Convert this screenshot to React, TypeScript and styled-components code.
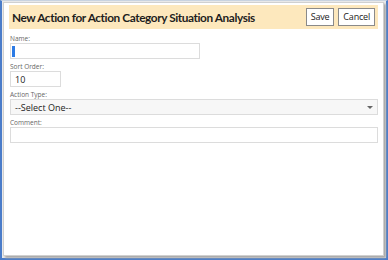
import React from 'react';
import styled, { createGlobalStyle } from 'styled-components';

const GlobalStyle = createGlobalStyle`
  html, body {
    margin: 0;
    padding: 0;
    width: 388px;
    height: 260px;
    overflow: hidden;
    font-family: "Open Sans", "Noto Sans", sans-serif;
  }
`;

const Frame = styled.div`
  box-sizing: border-box;
  width: 388px;
  height: 260px;
  border: 2px solid #4a7cc9;
  border-top: 1px solid #c9d3e0;
  background: #e9e9e9;
  padding: 1px 2px 2px 1px;
`;

const Dialog = styled.div`
  box-sizing: border-box;
  height: 100%;
  background: #ffffff;
  border: 1px solid #d0d0d0;
  box-shadow: 2px 2px 2px #a8a8a8;
  padding: 2px 5px 0 5px;
  display: flex;
  flex-direction: column;
`;

const Header = styled.div`
  display: flex;
  align-items: center;
  justify-content: space-between;
  background: #fde8bd;
  height: 24px;
  padding: 0 3px 0 3px;
`;

const Title = styled.h1`
  margin: 0;
  font-family: Lato, "Open Sans", sans-serif;
  font-size: 11.8px;
  font-weight: 700;
  color: #1e1e1e;
  white-space: nowrap;
  letter-spacing: -0.4px;
`;

const Buttons = styled.div`
  display: flex;
  gap: 4px;
`;

const Button = styled.button`
  font-family: "Open Sans", sans-serif;
  font-size: 9px;
  color: #222;
  background: #ffffff;
  border: 1px solid #8a8a8a;
  height: 18px;
  padding: 0 4px;
  line-height: 16px;
  letter-spacing: -0.2px;
`;

const Form = styled.div`
  display: flex;
  flex-direction: column;
  padding: 5px 0 0 1px;
`;

const Label = styled.label`
  font-size: 6.5px;
  color: #666;
  line-height: 9px;
  display: block;
`;

const Field = styled.div`
  margin-bottom: 3px;
`;

const Input = styled.div<{ $width?: string; $gray?: boolean }>`
  box-sizing: border-box;
  width: ${(p) => p.$width || '100%'};
  height: 16px;
  border: 1px solid #dcdcdc;
  background: ${(p) => (p.$gray ? '#f7f7f7' : '#ffffff')};
  display: flex;
  align-items: center;
  justify-content: space-between;
  padding: 0 4px;
  font-size: 9px;
  color: #222;
  position: relative;
`;

const Caret = styled.span`
  position: absolute;
  left: 1px;
  top: 2px;
  width: 3px;
  height: 11px;
  background: #2c7be5;
`;

const Arrow = styled.span`
  width: 0;
  height: 0;
  border-left: 3px solid transparent;
  border-right: 3px solid transparent;
  border-top: 3px solid #666;
`;

export default function App() {
  return (
    <>
      <GlobalStyle />
      <Frame>
        <Dialog>
          <Header>
            <Title>New Action for Action Category Situation Analysis</Title>
            <Buttons>
              <Button>Save</Button>
              <Button>Cancel</Button>
            </Buttons>
          </Header>
          <Form>
            <Field>
              <Label>Name:</Label>
              <Input $width="190px">
                <Caret />
              </Input>
            </Field>
            <Field>
              <Label>Sort Order:</Label>
              <Input $width="51px">10</Input>
            </Field>
            <Field>
              <Label>Action Type:</Label>
              <Input $gray>
                --Select One--
                <Arrow />
              </Input>
            </Field>
            <Field>
              <Label>Comment:</Label>
              <Input />
            </Field>
          </Form>
        </Dialog>
      </Frame>
    </>
  );
}
